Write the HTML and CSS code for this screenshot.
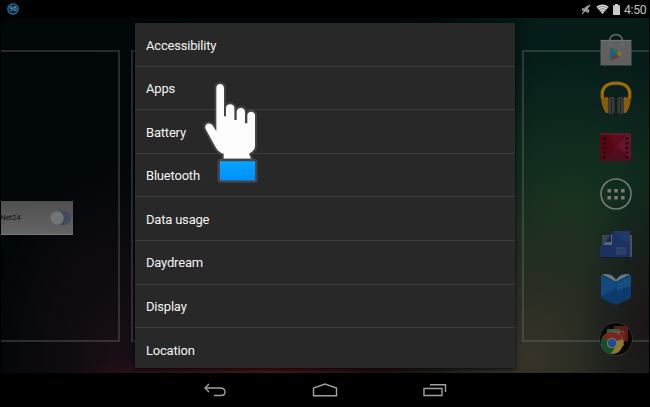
FILE: index.html
```
<!DOCTYPE html>
<html lang="en">
<head>
<meta charset="utf-8">
<title>Settings shortcut</title>
<link rel="stylesheet" href="styles.css">
</head>
<body>
<header class="status">
  <svg class="badge" width="12" height="12" viewBox="0 0 12 12"><circle cx="6" cy="6" r="5.2" fill="#06283c" stroke="#1b78b0" stroke-width="1.2"/><text x="6" y="8.3" text-anchor="middle">96</text></svg>
  <div class="indicators">
    <svg width="10" height="11" viewBox="0 0 10 11"><path d="M1 4h2l4-3v8L3 7H1z" fill="#858585"/><path d="M1 10 9 .8M7 8.500l1-3" stroke="#bbb" stroke-width="1.1"/></svg>
    <svg class="wifi" width="13" height="10" viewBox="0 0 13 10"><path d="M.2 2.8Q6.500-2 12.800 2.800L6.500 10z" fill="#ddd"/><path d="M1.200 4.200q5.300-3.600 10.600 0M2.600 5.900q3.900-2.600 7.800 0M4.200 7.600q2.300-1.300 4.600 0" stroke="#444" stroke-width=".6" fill="none"/></svg>
    <svg class="battery" width="7" height="11" viewBox="0 0 7 11"><path d="M2 0h3v1.300h2V11H0V1.300h2z" fill="#cacaca"/></svg>
    <span class="clock">4:50</span>
  </div>
</header>
<main class="desktop">
  <section class="page page-left">
    <div class="widget"><span>Net24</span><i class="switch"></i></div>
  </section>
  <section class="page page-center"></section>
  <section class="page page-right"></section>
  <nav class="dock">
    <svg width="34" height="32" viewBox="0 0 34 32"><path d="M1.5 6h31v25.5h-31z" fill="#606060"/><path d="M2 6.4h30" stroke="#777"/><path d="M10.5 13V7a6.5 6.5 0 0 1 13 0v6" fill="none" stroke="#686c6c" stroke-width="1.5"/><path d="M11 13v14l7-7z" fill="#235e77"/><path d="M11 13l9 4-2.5 3z" fill="#2d6c50"/><path d="M20 17l3.5 3-3.5 3-2.5-3z" fill="#817032"/><path d="M11 27l9-4-2.5-3z" fill="#7a3030"/></svg>
    <svg width="34" height="34" viewBox="0 0 34 34"><path d="M3.5 18Q1 2.2 17 2.2T30.500 18" fill="none" stroke="#9d6b0b" stroke-width="3.2"/><path d="M2 17l7-1v16H7q-4-5-5-15M32 17l-7-1v16h2q4-5 5-15" fill="#8b5b0c"/><path d="M9 17q6-3 6.500 1v13q-.5 4-6.500 1zM25 17q-6-3-6.500 1v13q.5 4 6.500 1z" fill="#3a3b39"/><path d="M12.500 17v16M21.500 17v16" stroke="#242526"/></svg>
    <svg width="34" height="29" viewBox="0 0 34 29"><path d="M1 1h31v27H1z" fill="#570714"/><path d="M10 1h17L15 14z" fill="#610c1d"/><path d="M17 13L32 26V1h-4z" fill="#65152b"/><path d="M17 13l14 15H4z" fill="#500d1d"/><path d="M5.5 4.5v22M28 4.5v22" stroke="#170c10" stroke-width="3" stroke-dasharray="2 2.7"/><path d="M1 1h31" stroke="#70222c"/></svg>
    <svg width="34" height="34" viewBox="0 0 34 34"><circle cx="17" cy="17" r="15" fill="none" stroke="#737a74" stroke-width="1.6"/><path d="M8.500 12h3.500v3.500H8.500zM15.300 12h3.500v3.500h-3.500zM22.100 12h3.500v3.500h-3.500zM8.500 19h3.500v3.500H8.500zM15.300 19h3.500v3.500h-3.500zM22.100 19h3.500v3.500h-3.500z" fill="#777c76"/></svg>
    <svg width="34" height="29" viewBox="0 0 34 29"><path d="M3 5h30v22H3z" fill="#4b515b"/><path d="M1 17L14 1h17v27H1z" fill="#1b3160"/><path d="M14 1h17v12L23 10z" fill="#213969"/><path d="M3 5h7L3 15z" fill="#3d444f"/><path d="M4 15L13 4v11z" fill="#5b6575"/><path d="M7 12l5-7v7z" fill="#182947"/><path d="M17 17h10v8H17z" fill="#2d406a"/><path d="M20 17v8M24 17v8M17 20.500h10" stroke="#233b69" stroke-width=".8"/><path d="M1 27.5h30" stroke="#101c3b"/></svg>
    <svg width="34" height="34" viewBox="0 0 34 34"><path d="M2 3l10-1 5 5 5-5 10 1v23L17 33 2 26z" fill="#0c4378"/><path d="M2 4l15 6v22L2 25z" fill="#124a80"/><path d="M2 25l15-9L32 4v22L17 33z" fill="#0c3a6d"/><path d="M18 10l14-6v10l-14 5z" fill="#174d7c"/><path d="M3 2q10-1 14 6Q22 1 31 2L18 9h-2z" fill="#7a7c76"/></svg>
    <svg width="36" height="36" viewBox="0 0 36 36"><circle cx="18" cy="18" r="16.5" fill="#070808" stroke="#34342d"/><path d="M16 5h14v15l-4 1V11H16z" fill="#5d1b16"/><path d="M9 8h13v4H9z" fill="#365d37"/><path d="M13 10h13v15H13z" fill="#61564a"/><path d="M22 11h5v8h-5z" fill="#72251f"/><circle cx="14" cy="22" r="11" fill="#8f7a29"/><path d="M14 22L4.500 16.500A11 11 0 0 1 24.200 18z" fill="#79251f"/><path d="M4.500 16.500A11 11 0 0 0 13 33L18.500 24 14 22z" fill="#174c2c"/><circle cx="14" cy="22" r="5.2" fill="#777"/><circle cx="14" cy="22" r="4.2" fill="#244d8d"/></svg>
  </nav>
  <ul class="dialog">
    <li>Accessibility</li><li>Apps</li><li>Battery</li><li>Bluetooth</li><li>Data usage</li><li>Daydream</li><li>Display</li><li>Location</li>
  </ul>
  <svg class="hand" width="90" height="115" viewBox="0 0 270 345">
    <defs><linearGradient id="cuff" x1="0" y1="0" x2="0" y2="1"><stop stop-color="#06a7ff"/><stop offset="1" stop-color="#008bff"/></linearGradient></defs>
    <path class="skin" d="M79 39C79 23 102 23 102 39V124H108V99C108 84 133 84 133 99V135H140V111C140 95 165 95 165 111V145H172V121C172 107 195 107 195 121V213Q195 227 177 236L183 251H101V236Q86 232 78 218L48 164C40 147 59 139 69 153L79 169Z"/>
    <rect x="86" y="255" width="113" height="65" rx="4" fill="url(#cuff)" stroke="#444" stroke-width="7"/>
  </svg>
</main>
<footer class="navbar">
  <svg width="24" height="14" viewBox="0 0 24 14"><path d="M6 1L2 5l4 4M2 5h15q5 0 5 3.800T18 12.500h-7"/></svg>
  <svg width="26" height="14" viewBox="0 0 26 14"><path d="M1.500 12.700V5L13 1l11.500 4v7.700z"/></svg>
  <svg width="24" height="14" viewBox="0 0 24 14"><path d="M1 5.500h18v7H1zM7 1.800h15.500V9"/></svg>
</footer>
</body>
</html>
```
FILE: styles.css
```
* { box-sizing: border-box; }
body {
  margin: 0;
  width: 650px;
  height: 407px;
  display: flex;
  flex-direction: column;
  background: #000;
  font-family: Roboto, "Liberation Sans", sans-serif;
  overflow: hidden;
}
svg { display: block; flex: none; }
.status {
  height: 18px;
  padding: 0 4px 0 7px;
  display: flex;
  align-items: center;
  justify-content: space-between;
}
.badge text { font-size: 6.5px; font-weight: bold; fill: #658da5; }
.indicators { display: flex; align-items: center; }
.wifi { margin-left: 5px; }
.battery { margin: 0 4px 0 4px; }
.clock { font-size: 12.2px; line-height: 18px; padding-top: 2px; color: #c4c4c4; width: 22px; white-space: nowrap; letter-spacing: -.3px; }
.desktop {
  position: relative;
  height: 355px;
  margin: 0 1px;
  display: grid;
  grid-template-columns: 119px 380px 129px;
  column-gap: 11px;
  padding: 32px 0;
  overflow: hidden;
  background:
    radial-gradient(ellipse 190px 20px at 265px 100%, #4a1517 0%, transparent 100%),
    radial-gradient(ellipse 70px 150px at 100% 88%, #1b1617 0%, transparent 100%),
    radial-gradient(ellipse 170px 180px at 530px 95%, #383328 0%, #36312699 45%, transparent 100%),
    radial-gradient(ellipse 160px 150px at 570px 52%, #17331f 0%, #15301f99 50%, transparent 100%),
    radial-gradient(ellipse 130px 200px at 115px 95%, #190e16 0%, transparent 100%),
    linear-gradient(90deg, #010609 0%, #02080b 65%, #051d1a 83%, #061c19 100%);
}
.page { height: 292px; border: 2px solid rgba(110,120,120,.34); }
.page-left { border-left: 0; padding-top: 149px; }
.page-right { border-right: 0; }
.widget {
  width: 72px;
  height: 34px;
  display: flex;
  align-items: center;
  justify-content: space-between;
  padding-right: 2px;
  background: linear-gradient(#4f4f4f, #646464);
  border-bottom: 1px solid #777;
  color: #111;
  font-size: 8px;
  letter-spacing: -.2px;
  overflow: hidden;
}
.widget span { margin-left: -1px; }
.switch { width: 21px; height: 14px; border-radius: 7px; background: radial-gradient(circle at 7px 7px, #747474 6.3px, #414b5c 7px); }
.dock {
  position: absolute;
  top: 16px;
  right: 15px;
  display: flex;
  flex-direction: column;
  align-items: center;
}
.dock svg:nth-child(2) { margin-top: 14.5px; }
.dock svg:nth-child(3) { margin-top: 18.5px; }
.dock svg:nth-child(4) { margin-top: 15px; }
.dock svg:nth-child(5) { margin-top: 19px; }
.dock svg:nth-child(6) { margin-top: 13px; }
.dock svg:nth-child(7) { margin-top: 15px; }
.dialog {
  position: absolute;
  left: 134px;
  top: 5px;
  width: 380px;
  height: 345px;
  margin: 0;
  padding: 0;
  list-style: none;
  overflow: hidden;
  background: #282828;
  border-radius: 1px;
  box-shadow: 0 1px 4px rgba(0,0,0,.8);
}
.dialog li {
  height: 43.6px;
  padding: 1.5px 11px 0;
  line-height: 42px;
  font-size: 13px;
  letter-spacing: -.2px;
  color: #f4f4f4;
  border-bottom: 1px solid #3d3d3d;
}
.hand { position: absolute; left: 189px; top: 57px; }
.skin { fill: #fdfdfd; stroke: #444; stroke-width: 12px; paint-order: stroke; stroke-linejoin: round; }
.navbar {
  height: 34px;
  display: flex;
  align-items: center;
  justify-content: center;
  gap: 85px;
}
.navbar path { fill: none; stroke: #a0a0a0; stroke-width: 1.4; }
```
